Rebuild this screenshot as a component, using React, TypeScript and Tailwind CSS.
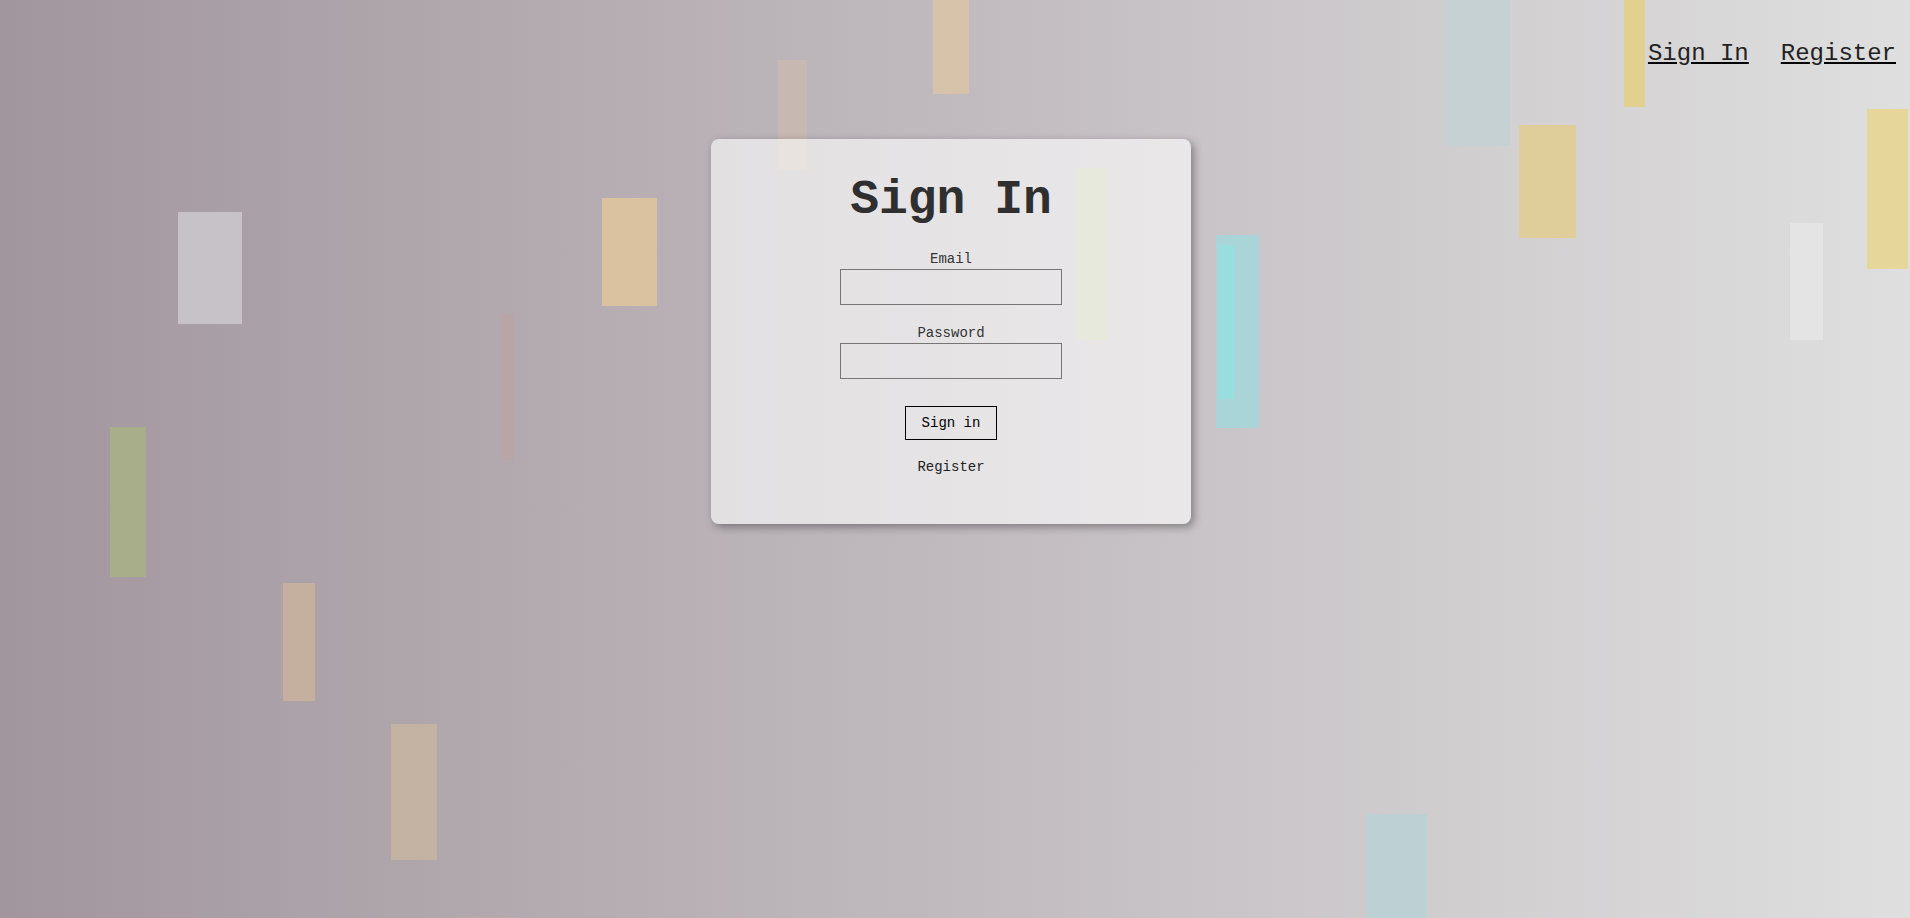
import React from "react";

const Rect = ({ className }: { className: string }) => (
  <div className={"absolute " + className} />
);

export default function App() {
  return (
    <div className="relative h-[918px] w-full overflow-hidden bg-[linear-gradient(to_right,#a2969e,#dfdfdf)] font-['Courier_New','Nimbus_Mono_PS','FreeMono','Liberation_Mono',monospace]">
      {/* decorative falling bars on a free canvas */}
      <div className="pointer-events-none absolute inset-0">
        <Rect className="left-[178px] top-[212px] h-[112px] w-[64px] bg-[#c7c2c7]" />
        <Rect className="left-[110px] top-[427px] h-[150px] w-[36px] bg-[#a9ae8a]" />
        <Rect className="left-[283px] top-[583px] h-[118px] w-[32px] bg-[#c5b09f]" />
        <Rect className="left-[391px] top-[724px] h-[136px] w-[46px] bg-[#c4b3a3]" />
        <Rect className="left-[452px] top-[917px] h-[2px] w-[68px] bg-[#c0a8a8]" />
        <Rect className="left-[602px] top-[198px] h-[108px] w-[55px] bg-[#dac19f]" />
        <Rect className="left-[501px] top-[314px] h-[146px] w-[13px] bg-[#b8a5a8]" />
        <Rect className="left-[778px] top-[60px] h-[110px] w-[29px] bg-[#c7b8b1]" />
        <Rect className="left-[933px] top-0 h-[94px] w-[36px] bg-[#d6c3aa]" />
        <Rect className="left-[1077px] top-[168px] h-[172px] w-[30px] bg-[#c4c9a9]" />
        <Rect className="left-[1216px] top-[235px] h-[193px] w-[43px] bg-[#a9d5d8]" />
        <Rect className="left-[1219px] top-[245px] h-[154px] w-[15px] bg-[#97dfdf]" />
        <Rect className="left-[1444px] top-0 h-[146px] w-[66px] bg-[#c5d1d2]" />
        <Rect className="left-[1519px] top-[125px] h-[113px] w-[57px] bg-[#dfcd9a]" />
        <Rect className="left-[1624px] top-0 h-[107px] w-[21px] bg-[#e2d08f]" />
        <Rect className="left-[1867px] top-[109px] h-[160px] w-[41px] bg-[#e7d69a]" />
        <Rect className="left-[1790px] top-[223px] h-[117px] w-[33px] bg-[#e4e4e4]" />
        <Rect className="left-[1366px] top-[814px] h-[104px] w-[61px] bg-[#bdd1d4]" />
      </div>

      <div className="relative flex flex-col">
        <nav className="flex justify-end gap-8 pr-[14px] pt-[40px] text-[24px] leading-[27px] text-[#222]">
          <a href="#" className="underline decoration-black">Sign In</a>
          <a href="#" className="underline decoration-black">Register</a>
        </nav>

        <div className="mt-[72px] flex justify-center pr-2">
          <div className="flex w-[480px] flex-col items-center rounded-lg bg-white/60 pb-[49px] pt-[34px] shadow-[3px_3px_8px_rgba(0,0,0,0.35)]">
            <h1 className="text-[48px] font-bold leading-[54px] text-[#2f2f2f]">Sign In</h1>
            <label className="mt-[24px] text-[14px] leading-[16px] text-[#333]">Email</label>
            <input
              type="email"
              className="mt-[2px] h-[36px] w-[222px] border border-[#767676] bg-transparent px-1 text-[14px] outline-none"
            />
            <label className="mt-[20px] text-[14px] leading-[16px] text-[#333]">Password</label>
            <input
              type="password"
              className="mt-[2px] h-[36px] w-[222px] border border-[#767676] bg-transparent px-1 text-[14px] outline-none"
            />
            <button className="mt-[27px] h-[34px] w-[92px] border border-black bg-transparent text-[14px] leading-[16px] text-black">
              Sign in
            </button>
            <a href="#" className="mt-[19px] text-[14px] leading-[16px] text-[#222]">Register</a>
          </div>
        </div>
      </div>
    </div>
  );
}
